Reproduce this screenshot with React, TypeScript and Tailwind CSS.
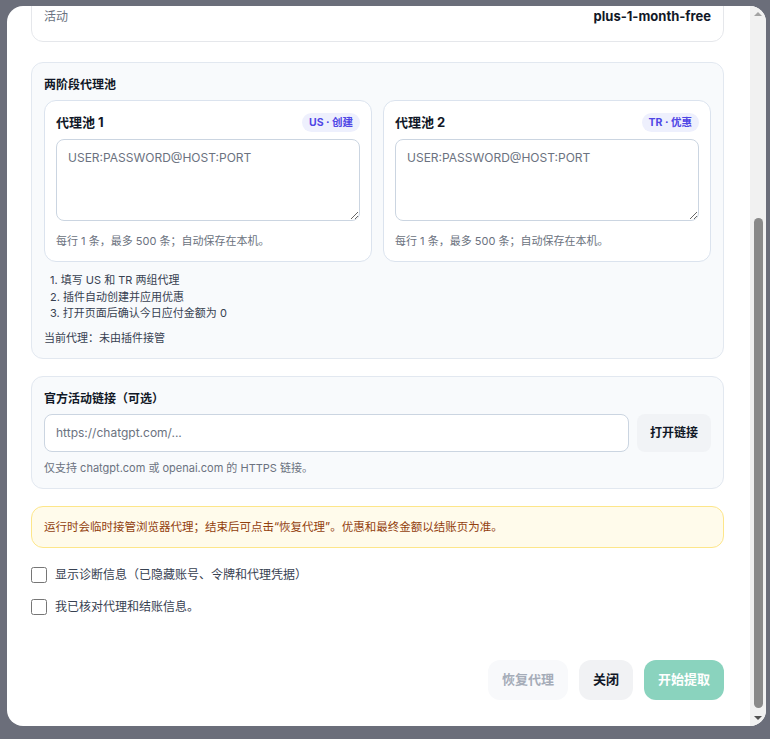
import React, { useEffect, useRef } from 'react';

const font = { fontFamily: 'Inter, "Noto Sans CJK SC", sans-serif' };

const Pool: React.FC<{ title: string; badge: string }> = ({ title, badge }) => (
  <div className="flex-1 bg-white border border-[#dbe3ee] rounded-xl px-[11px] pt-[12px] pb-[12px]">
    <div className="flex items-center justify-between h-[20px]">
      <span className="text-[13px] font-bold text-[#111827]">{title}</span>
      <span className="text-[10.5px] font-bold text-[#4f46e5] bg-[#eef0fd] rounded-full px-[7px] py-[2px]">{badge}</span>
    </div>
    <textarea
      className="mt-[6px] w-full h-[82px] border border-[#cbd5e1] rounded-lg px-[11px] py-[9px] text-[12px] text-[#111827] placeholder:text-[#6b7280] outline-none bg-white block"
      placeholder="USER:PASSWORD@HOST:PORT"
    />
    <p className="mt-[12px] text-[11px] text-[#6b7280]">每行 1 条，最多 500 条；自动保存在本机。</p>
  </div>
);

export default function App() {
  const ref = useRef<HTMLDivElement>(null);
  useEffect(() => {
    if (ref.current) ref.current.scrollTop = 100000;
  }, []);
  return (
    <div className="w-[770px] h-[739px] bg-[#6b6e7a] pt-[6px] pl-[7px]" style={font}>
      <div className="w-[759px] h-[720px] bg-white rounded-2xl overflow-hidden flex">
        <div ref={ref} className="flex-1 h-full overflow-hidden">
          <div className="pl-[24px] pr-[26px] pt-[24px] pb-[26px] flex flex-col gap-[17px]">
            <div className="text-[18px] font-bold text-[#111827]">提取优惠链接</div>
            <div className="bg-white border border-[#e5e7eb] rounded-xl px-[12px] py-[14px] flex flex-col gap-[14px]">
              {[['账号', 'user@example.com'], ['套餐', 'ChatGPT Plus'], ['活动', 'plus-1-month-free']].map(([k, v]) => (
                <div key={k} className="flex justify-between items-center text-[12px]">
                  <span className="text-[#6b7280]">{k}</span>
                  <span className="font-bold text-[#111827] text-[13px]">{v}</span>
                </div>
              ))}
            </div>

            <div className="bg-[#f8fafc] border border-[#e2e8f0] rounded-xl p-[12px] pt-[13px] mt-[3px]">
              <div className="text-[12px] font-bold text-[#111827] h-[18px]">两阶段代理池</div>
              <div className="mt-[6px] flex gap-[11px]">
                <Pool title="代理池 1" badge="US · 创建" />
                <Pool title="代理池 2" badge="TR · 优惠" />
              </div>
              <ol className="mt-[10px] ml-[6px] text-[11px] text-[#374151] leading-[16.5px]">
                <li>1. 填写 US 和 TR 两组代理</li>
                <li>2. 插件自动创建并应用优惠</li>
                <li>3. 打开页面后确认今日应付金额为 0</li>
              </ol>
              <p className="mt-[8px] text-[11px] text-[#374151] leading-[16px]">当前代理：未由插件接管</p>
            </div>

            <div className="bg-[#f8fafc] border border-[#e2e8f0] rounded-xl px-[12px] pt-[13px] pb-[12px]">
              <div className="text-[12px] font-bold text-[#111827] h-[18px]">官方活动链接（可选）</div>
              <div className="mt-[6px] flex gap-[8px]">
                <input
                  className="flex-1 h-[38px] border border-[#cbd5e1] rounded-lg px-[11px] text-[12px] placeholder:text-[#6b7280] bg-white outline-none"
                  placeholder="https://chatgpt.com/..."
                />
                <button className="w-[74px] h-[38px] rounded-lg bg-[#f1f3f6] text-[12px] font-bold text-[#111827]">打开链接</button>
              </div>
              <p className="mt-[8px] text-[11px] text-[#6b7280]">仅支持 chatgpt.com 或 openai.com 的 HTTPS 链接。</p>
            </div>

            <div className="bg-[#fffbeb] border border-[#fde68a] rounded-xl px-[12px] py-[12px] text-[11.5px] text-[#92400e] leading-[16px]">
              运行时会临时接管浏览器代理；结束后可点击“恢复代理”。优惠和最终金额以结账页为准。
            </div>

            <div className="flex flex-col gap-[15px] mt-[1px]">
              {['显示诊断信息（已隐藏账号、令牌和代理凭据）', '我已核对代理和结账信息。'].map((t) => (
                <label key={t} className="flex items-center gap-[8px] text-[12px] text-[#374151] h-[17px]">
                  <input type="checkbox" className="w-[16px] h-[16px] m-0" />
                  <span>{t}</span>
                </label>
              ))}
            </div>

            <div className="flex justify-end gap-[11px] mt-[28px]">
              <button className="w-[80px] h-[40px] rounded-xl bg-[#f8f9fb] text-[13px] font-bold text-[#a5acb8]">恢复代理</button>
              <button className="w-[54px] h-[40px] rounded-xl bg-[#f1f2f4] text-[13px] font-bold text-[#111827]">关闭</button>
              <button className="w-[80px] h-[40px] rounded-xl bg-[#8ad3be] text-[13px] font-bold text-white">开始提取</button>
            </div>
          </div>
        </div>
        <div className="w-[16px] h-full bg-[#f1f1f1] flex flex-col items-center">
          <svg width="16" height="16" viewBox="0 0 16 16" className="shrink-0">
            <path d="M4 10 L8 6 L12 10 Z" fill="#a3a3a3" />
          </svg>
          <div className="flex-1 w-full flex flex-col pt-[196px] pb-[2px] items-center">
            <div className="w-[9px] flex-1 bg-[#8a8a8a] rounded-full" />
          </div>
          <svg width="16" height="16" viewBox="0 0 16 16" className="shrink-0">
            <path d="M4 6 L8 10 L12 6 Z" fill="#505050" />
          </svg>
        </div>
      </div>
    </div>
  );
}
